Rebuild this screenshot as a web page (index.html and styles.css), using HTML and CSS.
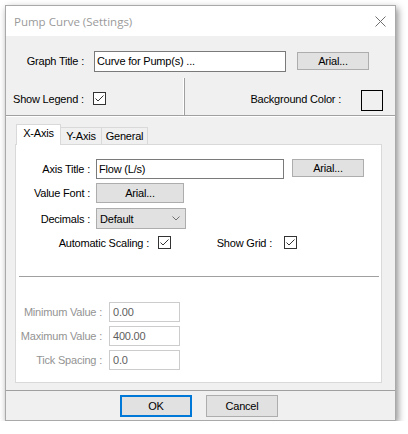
FILE: index.html
```html
<!DOCTYPE html>
<html>
<head>
<meta charset="utf-8">
<link rel="stylesheet" href="styles.css">
</head>
<body>
<div class="window">
  <div class="titlebar">
    <span class="title">Pump Curve (Settings)</span>
    <svg class="close" width="11" height="11" viewBox="0 0 11 11"><path d="M0.5 0.5 L10.5 10.5 M10.5 0.5 L0.5 10.5" stroke="#707070" stroke-width="1" fill="none"/></svg>
  </div>
  <div class="top">
    <div class="graph-row">
      <span class="gt-label">Graph Title :</span>
      <div class="textbox gt-input">Curve for Pump(s) ...</div>
      <div class="button gt-btn">Arial...</div>
    </div>
    <div class="legend-row">
      <div class="legend-left">
        <span class="legend-label">Show Legend :</span>
        <svg class="check" width="13" height="13" viewBox="0 0 13 13"><rect x="0.5" y="0.5" width="12" height="12" fill="#fff" stroke="#333"/><polyline points="2.5,6.5 5,9 10.5,3.5" fill="none" stroke="#333" stroke-width="1"/></svg>
      </div>
      <div class="legend-right">
        <span>Background Color :</span>
        <div class="swatch"></div>
      </div>
    </div>
  </div>
  <div class="tabs">
    <div class="tabstrip">
      <div class="tab active">X-Axis</div>
      <div class="tab">Y-Axis</div>
      <div class="tab">General</div>
    </div>
    <div class="panel">
      <div class="frow r1">
        <span class="flabel">Axis Title :</span>
        <div class="textbox axis-input">Flow (L/s)</div>
        <div class="button axis-btn">Arial...</div>
      </div>
      <div class="frow r2">
        <span class="flabel">Value Font :</span>
        <div class="button vf-btn">Arial...</div>
      </div>
      <div class="frow r3">
        <span class="flabel">Decimals :</span>
        <div class="select"><span>Default</span><svg width="8" height="5" viewBox="0 0 8 5"><polyline points="0.5,0.5 4,4 7.5,0.5" fill="none" stroke="#707070" stroke-width="1"/></svg></div>
      </div>
      <div class="frow r4">
        <span class="cl1">Automatic Scaling :</span>
        <svg class="check" width="13" height="13" viewBox="0 0 13 13"><rect x="0.5" y="0.5" width="12" height="12" fill="#fff" stroke="#333"/><polyline points="2.5,6.5 5,9 10.5,3.5" fill="none" stroke="#333" stroke-width="1"/></svg>
        <span class="cl2">Show Grid :</span>
        <svg class="check" width="13" height="13" viewBox="0 0 13 13"><rect x="0.5" y="0.5" width="12" height="12" fill="#fff" stroke="#333"/><polyline points="2.5,6.5 5,9 10.5,3.5" fill="none" stroke="#333" stroke-width="1"/></svg>
      </div>
      <div class="sep"></div>
      <div class="frow drow d1">
        <span class="dlabel">Minimum Value :</span>
        <div class="dinput">0.00</div>
      </div>
      <div class="frow drow">
        <span class="dlabel">Maximum Value :</span>
        <div class="dinput">400.00</div>
      </div>
      <div class="frow drow">
        <span class="dlabel">Tick Spacing :</span>
        <div class="dinput">0.0</div>
      </div>
    </div>
  </div>
  <div class="footer">
    <div class="button fbtn ok">OK</div>
    <div class="button fbtn">Cancel</div>
  </div>
</div>
</body>
</html>
```

FILE: styles.css
```css
* { box-sizing: border-box; }
html, body { margin: 0; padding: 0; background: #fff; }
body {
  font-family: "Liberation Sans", Arial, sans-serif;
  font-size: 11px;
  letter-spacing: -0.2px;
  color: #000;
  white-space: nowrap;
}
.window {
  margin: 5px 0 0 5px;
  width: 391px;
  height: 416px;
  border: 1px solid #a9a9a9;
  background: #f0f0f0;
  box-shadow: 2px 3px 7px rgba(0, 0, 0, 0.45);
  display: flex;
  flex-direction: column;
}
.titlebar {
  height: 30px;
  background: #fff;
  display: flex;
  align-items: center;
  justify-content: space-between;
  padding: 0 9px 0 8px;
}
.title {
  font-family: "Open Sans", "Noto Sans", sans-serif;
  font-size: 11.5px;
  letter-spacing: 0;
  color: #9a9a9a;
}
.close { display: block; }

.top {
  padding-top: 15px;
  border-bottom: 1px solid #a0a0a0;
}
.graph-row {
  display: flex;
  align-items: flex-start;
  height: 21px;
}
.gt-label {
  width: 78px;
  text-align: right;
  line-height: 21px;
  margin-right: 10px;
}
.textbox {
  background: #fff;
  border: 1px solid #7a7a7a;
  padding-left: 2px;
}
.gt-input {
  width: 192px;
  height: 21px;
  line-height: 19px;
}
.button {
  background: #e1e1e1;
  border: 1px solid #adadad;
  text-align: center;
}
.gt-btn {
  margin: 1px 0 0 11px;
  width: 72px;
  height: 18px;
  line-height: 16px;
}
.legend-row {
  display: flex;
  height: 37px;
  margin-top: 6px;
}
.legend-left {
  width: 178px;
  border-right: 1px solid #fff;
  display: flex;
  align-items: center;
  padding: 4px 0 0 7px;
}
.legend-label { width: 80px; }
.check { display: block; flex: none; }
.legend-right {
  flex: 1;
  border-left: 1px solid #a0a0a0;
  display: flex;
  align-items: center;
  justify-content: flex-end;
  padding: 4px 12px 0 0;
}
.swatch {
  width: 22px;
  height: 21px;
  border: 1px solid #000;
  margin: 4px 0 0 20px;
}

.tabs {
  border-top: 1px solid #fff;
  padding: 7px 13px 0 9px;
}
.tabstrip {
  display: flex;
  align-items: flex-end;
  height: 20px;
  padding-left: 1px;
}
.tab {
  height: 17px;
  border: 1px solid #d9d9d9;
  border-bottom: none;
  background: #f0f0f0;
  text-align: center;
  line-height: 16px;
  margin-left: -1px;
}
.tab:nth-child(2) { width: 42px; }
.tab:nth-child(3) { width: 47px; }
.tab.active {
  width: 45px;
  height: 21px;
  background: #fff;
  margin-bottom: -1px;
  margin-left: 0;
  position: relative;
  z-index: 1;
  line-height: 16px;
}
.panel {
  background: #fff;
  border: 1px solid #d9d9d9;
  padding: 14px 0 12px 0;
}
.frow {
  display: flex;
  align-items: center;
}
.flabel {
  width: 74px;
  text-align: right;
  margin-right: 6px;
}
.r1 { align-items: flex-start; height: 20px; }
.r1 .flabel { line-height: 20px; }
.axis-input {
  width: 188px;
  height: 20px;
  line-height: 18px;
}
.axis-btn {
  margin-left: 8px;
  width: 72px;
  height: 18px;
  line-height: 16px;
}
.r2 { margin-top: 4px; height: 20px; }
.vf-btn {
  width: 88px;
  height: 20px;
  line-height: 18px;
}
.r3 { margin-top: 5px; height: 21px; }
.select {
  width: 90px;
  height: 21px;
  background: #e1e1e1;
  border: 1px solid #adadad;
  display: flex;
  align-items: center;
  justify-content: space-between;
  padding: 0 5px 0 3px;
}
.select svg { display: block; }
.r4 { margin-top: 4px; height: 19px; }
.cl1 {
  width: 133px;
  text-align: right;
  margin-right: 9px;
}
.cl2 {
  width: 101px;
  text-align: right;
  margin-right: 12px;
}
.sep {
  height: 1px;
  background: #a0a0a0;
  margin: 24px 2px 0 3px;
}
.drow { height: 20px; margin-top: 4px; }
.drow.d1 { margin-top: 25px; }
.dlabel {
  width: 86px;
  text-align: right;
  margin-right: 7px;
  color: #939393;
}
.dinput {
  width: 71px;
  height: 20px;
  border: 1px solid #cccccc;
  background: #fff;
  color: #5e5e5e;
  line-height: 18px;
  padding-left: 3px;
}

.footer {
  margin-top: 7px;
  border-top: 1px solid #a0a0a0;
  padding: 4px 3px 3px 0;
  display: flex;
  justify-content: center;
  gap: 14px;
}
.fbtn {
  width: 72px;
  height: 22px;
  line-height: 20px;
}
.fbtn.ok {
  border: 2px solid #0078d7;
  line-height: 18px;
}
```
